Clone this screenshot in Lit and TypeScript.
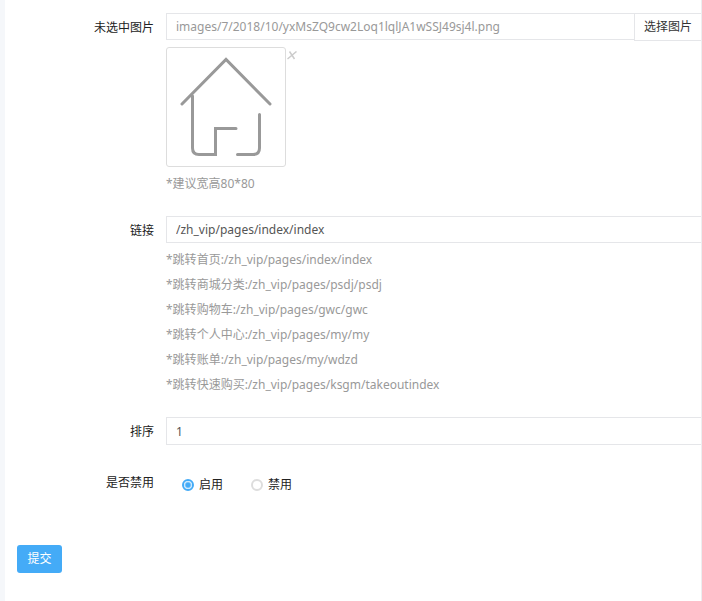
import { LitElement, html, css } from "lit";
import { customElement, state } from "lit/decorators.js";

@customElement("app-root")
export class AppRoot extends LitElement {
  static styles = css`
    :host {
      display: block;
      min-height: 100vh;
      box-sizing: border-box;
      padding: 0 0 0 5px;
      background: #f5f7fa;
      color: #222;
      font: 12px/25px "Noto Sans", "Noto Sans CJK SC", sans-serif;
    }
    * {
      box-sizing: border-box;
    }
    .panel {
      min-height: 100vh;
      padding: 13px 0 28px;
      background: #fff;
      border-right: 1px solid #eceef0;
    }
    .row {
      display: grid;
      grid-template-columns: 149px minmax(0, 1fr);
      column-gap: 12px;
      margin-bottom: 20px;
    }
    .label {
      text-align: right;
      line-height: 30px;
    }
    .text,
    .pick,
    .submit {
      font: inherit;
      line-height: 20px;
      margin: 0;
    }
    .text {
      display: block;
      width: 100%;
      height: 27px;
      padding: 0 9px;
      border: 1px solid #e5e6e9;
      border-right: 0;
      border-radius: 0;
      background: #fff;
      color: #555;
      outline: 0;
    }
    .muted {
      color: #999;
    }
    .tall {
      height: 28px;
    }
    .group {
      display: flex;
      align-items: flex-start;
    }
    .pick {
      flex: none;
      height: 28px;
      padding: 0 9px;
      border: 1px solid #e5e6e9;
      border-right: 0;
      background: #fff;
      color: #333;
    }
    .preview {
      display: flex;
      align-items: flex-start;
      margin: 6px 0 4px;
    }
    .frame {
      width: 120px;
      height: 120px;
      border: 1px solid #ddd;
      border-radius: 3px;
    }
    .frame svg,
    .remove svg {
      display: block;
    }
    .remove {
      padding: 4px 1px;
      border: 0;
      background: none;
    }
    .hint {
      margin: 0;
      color: #999;
    }
    .hints {
      margin-top: 4px;
    }
    .options {
      display: flex;
      gap: 28px;
      margin: 0;
      padding: 3px 16px 0;
    }
    .option {
      display: flex;
      align-items: center;
      gap: 5px;
      line-height: 28px;
    }
    .radio {
      appearance: none;
      width: 12px;
      height: 12px;
      margin: 0;
      border: 2px solid #ddd;
      border-radius: 50%;
      background: #fff;
    }
    .radio:checked {
      border-color: #44abf7;
      background: radial-gradient(circle, #44abf7 2px, #fff 4px) padding-box;
    }
    .choice {
      margin: 21px 0 46px;
    }
    .submit {
      display: block;
      width: 45px;
      height: 28px;
      margin-left: 12px;
      padding: 0;
      border: 0;
      border-radius: 3px;
      background: #44abf7;
      color: #fff;
    }
  `;

  @state() private disabled = false;

  private links = [
    ["首页", "index/index"],
    ["商城分类", "psdj/psdj"],
    ["购物车", "gwc/gwc"],
    ["个人中心", "my/my"],
    ["账单", "my/wdzd"],
    ["快速购买", "ksgm/takeoutindex"],
  ];

  render() {
    return html`
      <form class="panel" @submit=${(e: Event) => e.preventDefault()}>
        <div class="row">
          <label class="label" for="image">未选中图片</label>
          <div>
            <div class="group">
              <input id="image" class="text muted" .value=${"images/7/2018/10/yxMsZQ9cw2Loq1lqlJA1wSSJ49sj4l.png"} />
              <button class="pick" type="button">选择图片</button>
            </div>
            <div class="preview">
              <div class="frame">
                <svg width="118" height="118" viewBox="1 1 118 118" fill="none" stroke="#999" stroke-width="3" stroke-linecap="round" role="img" aria-label="首页">
                  <path d="M16 57 60 12.500l44 44.500" />
                  <path d="M26.500 49v52q0 6.500 6.500 6.500h16.500v-26H70" />
                  <path d="M71.500 107.500H87q6.500 0 6.500-6.500V67.500" />
                </svg>
              </div>
              <button class="remove" type="button" aria-label="删除">
                <svg width="10" height="9" viewBox="0 0 10 9" fill="none" stroke="#ccc" stroke-width="1.500">
                  <path d="M2.500.5 7.500 8M9.500.5.5 8" />
                </svg>
              </button>
            </div>
            <p class="hint">*建议宽高80*80</p>
          </div>
        </div>
        <div class="row">
          <label class="label" for="link">链接</label>
          <div>
            <input id="link" class="text" .value=${"/zh_vip/pages/index/index"} />
            <div class="hints">
              ${this.links.map(([name, path]) => html`<p class="hint">*跳转${name}:/zh_vip/pages/${path}</p>`)}
            </div>
          </div>
        </div>
        <div class="row">
          <label class="label" for="order">排序</label>
          <input id="order" class="text tall" .value=${"1"} />
        </div>
        <div class="row choice" role="radiogroup" aria-labelledby="state">
          <span id="state" class="label">是否禁用</span>
          <div class="options">
            <label class="option">
              <input class="radio" type="radio" name="state" .checked=${!this.disabled} @change=${() => (this.disabled = false)} />启用
            </label>
            <label class="option">
              <input class="radio" type="radio" name="state" .checked=${this.disabled} @change=${() => (this.disabled = true)} />禁用
            </label>
          </div>
        </div>
        <button class="submit" type="submit">提交</button>
      </form>
    `;
  }
}
